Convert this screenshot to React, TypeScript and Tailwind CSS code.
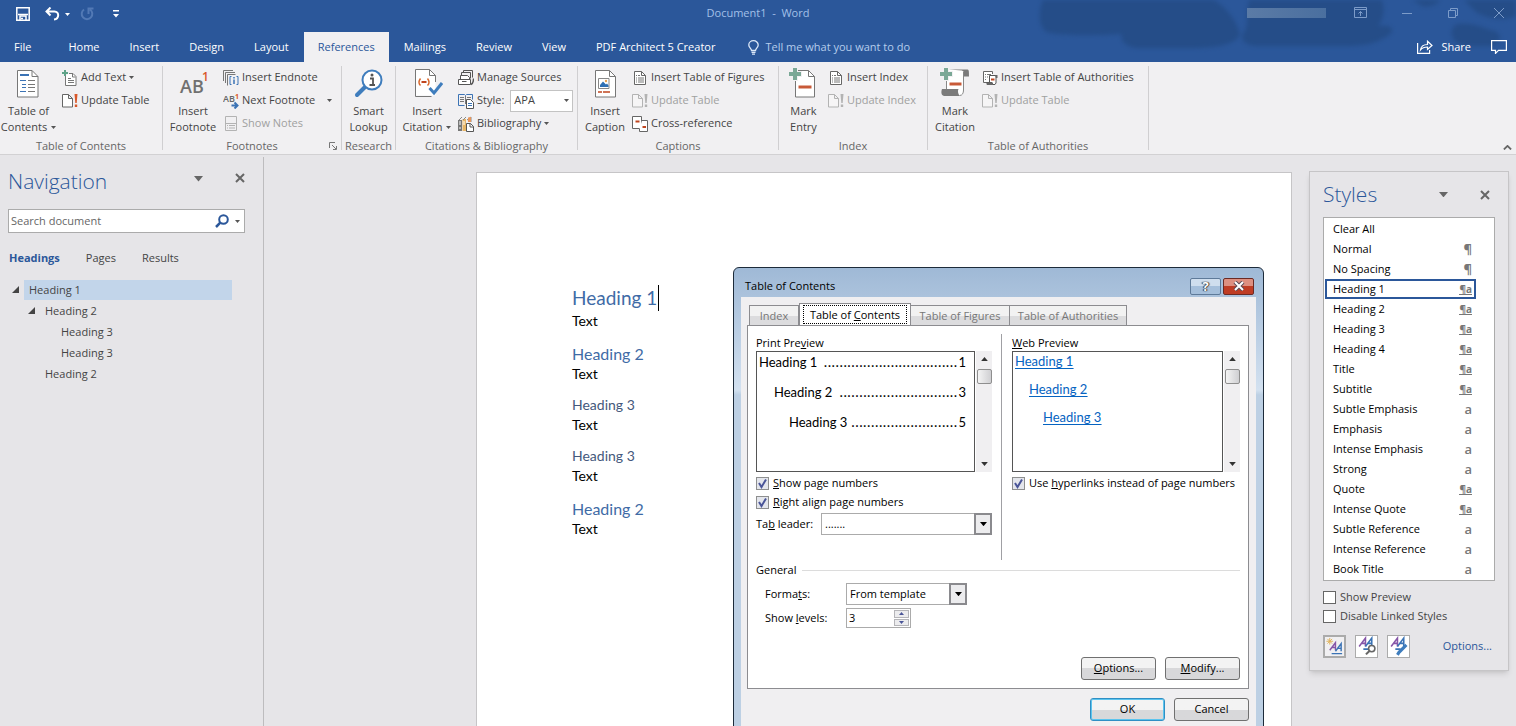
import type { ReactNode } from "react";

const navHeadings = [
  { text: "Heading 1", level: 1, open: true, selected: true },
  { text: "Heading 2", level: 2, open: true },
  { text: "Heading 3", level: 3 },
  { text: "Heading 3", level: 3 },
  { text: "Heading 2", level: 2 },
];

const indents: Record<number, string> = {
  1: "",
  2: "pl-4",
  3: "pl-8",
};

const styleNames: [string, string][] = [
  ["Clear All", ""],
  ["Normal", "p"],
  ["No Spacing", "p"],
  ["Heading 1", "pa"],
  ["Heading 2", "pa"],
  ["Heading 3", "pa"],
  ["Heading 4", "pa"],
  ["Title", "pa"],
  ["Subtitle", "pa"],
  ["Subtle Emphasis", "a"],
  ["Emphasis", "a"],
  ["Intense Emphasis", "a"],
  ["Strong", "a"],
  ["Quote", "pa"],
  ["Intense Quote", "pa"],
  ["Subtle Reference", "a"],
  ["Intense Reference", "a"],
  ["Book Title", "a"],
];

const Caret = ({ className = "w-[5px] text-[#555]" }: { className?: string }) => (
  <svg viewBox="0 0 10 6" fill="currentColor" className={`shrink-0 ${className}`}>
    <path d="M0 0h10L5 6z" />
  </svg>
);

const CloseIcon = () => (
  <svg viewBox="0 0 10 10" className="w-[10px] h-[10px]" stroke="#666" strokeWidth="2">
    <path d="M1 1l8 8M9 1L1 9" />
  </svg>
);

/* ---------- ribbon icons ---------- */

const Small = ({ children }: { children: ReactNode }) => (
  <svg viewBox="0 0 16 16" fill="none" className="w-4 h-4 shrink-0">
    {children}
  </svg>
);

const Big = ({ children }: { children: ReactNode }) => (
  <svg viewBox="0 0 32 32" fill="none" className="w-8 h-8 shrink-0">
    {children}
  </svg>
);

const TocIcon = () => (
  <Big>
    <path d="M4.500 4.500h14.500l6 6v20.500h-20.500z" fill="#fff" stroke="#777" />
    <path d="M19 4.500v6h6" stroke="#777" />
    <path d="M7 9h9" stroke="#3b73b5" strokeWidth="2" />
    <path d="M7 14.500h6M9 18.500h4M9 21.500h4M7 25.500h6" stroke="#3b73b5" />
    <path d="M15 14.500h7M15 18.500h7M15 21.500h7M15 25.500h7" stroke="#777" />
  </Big>
);

const AddTextIcon = () => (
  <Small>
    <path d="M3.500 6v9.500h10.500v-9l-3-3h-4" fill="#fff" stroke="#777" />
    <path d="M10.500 4v3h3M6 8.500h3M6 10.500h6M6 12.500h6" stroke="#777" />
    <path d="M3 0v6M0 3h6" stroke="#5fa389" strokeWidth="2" />
  </Small>
);

const UpdateIcon = ({ off }: { off?: boolean }) => (
  <Small>
    <path
      d="M.5 1.500h6l4 4v8.500H.5zM6.500 1.500v4h4"
      fill={off ? "#f6f5f6" : "#fff"}
      stroke={off ? "#b3b3b3" : "#666"}
    />
    <path d="M12.500 1h3l-.8 9h-1.400zM12.800 11.500h2.400v2.500h-2.400z" fill={off ? "#b3b3b3" : "#d9582b"} />
  </Small>
);

const FootnoteIcon = () => (
  <Big>
    <text x="3" y="27" fontSize="18" fontWeight="600" fill="#707070">
      AB
    </text>
    <text x="25" y="15" fontSize="12" fontWeight="600" fill="#d9582b">
      1
    </text>
  </Big>
);

const EndnoteIcon = () => (
  <Small>
    <path d="M.5 11V.5H10M2.500 13V2.500H12M4.500 15.500V4.500h8" stroke="#777" />
    <path d="M8.500 6.500h-1.500v8h1.500M13.500 6.500H15v8h-1.500" stroke="#3b73b5" />
    <path d="M11 7v1.500M11 9.500V14" stroke="#3b73b5" strokeWidth="1.500" />
  </Small>
);

const NextNoteIcon = () => (
  <Small>
    <text x="0" y="9" fontSize="9" fontWeight="600" fill="#666">
      AB
    </text>
    <text x="12" y="6" fontSize="7" fontWeight="700" fill="#d9582b">
      1
    </text>
    <path d="M8.500 12.500h5M11.500 9.500l3 3-3 3" stroke="#3b73b5" strokeWidth="2" />
  </Small>
);

const ShowNotesIcon = () => (
  <Small>
    <path d="M2.500.5h11v14h-11zM2.500 7.500h11" stroke="#b3b3b3" />
    <path d="M4 9.500h1M6 9.500h6M4 12h1M6 12h6" stroke="#b3b3b3" />
  </Small>
);

const LookupIcon = () => (
  <Big>
    <path d="M12 21l-8 8" stroke="#3f7dbd" strokeWidth="4" strokeLinecap="round" />
    <circle cx="19" cy="14" r="9.500" fill="#fff" stroke="#3f7dbd" strokeWidth="2" />
    <path d="M17 12.500h3v6M16.500 19h5.500" stroke="#555" strokeWidth="1.800" />
    <circle cx="19" cy="9" r="1.500" fill="#555" />
  </Big>
);

const CitationIcon = () => (
  <Big>
    <path d="M4.500 3.500h14l6 6v20h-20z" fill="#fff" />
    <path d="M24.500 16V9.500l-6-6h-14v27h16M18.500 3.500v6h6" stroke="#777" />
    <path d="M9.500 12.500c-2 2.500-2 5 0 7M16.500 12.500c2 2.500 2 5 0 7" stroke="#d9692f" strokeWidth="1.500" />
    <path d="M10.500 16h5" stroke="#c0451f" strokeWidth="2" />
    <path d="M18.500 22l4.500 5 8-10" stroke="#3f7dbd" strokeWidth="3" />
  </Big>
);

const SourcesIcon = () => (
  <Small>
    <path d="M5.500 3V.5h9v7M3.500 5V2.500h9v6" stroke="#555" />
    <path d="M2.500 9V5.500h7l2 2V9" fill="#fff" stroke="#555" />
    <path d="M.5 9.500h12v5H.5zM4 11.500h4.500" fill="#fff" stroke="#555" />
    <path d="M13 14.500c2-1 2.500-2.500 2.500-6" stroke="#555" strokeWidth="1.500" />
  </Small>
);

const StyleIcon = () => (
  <Small>
    <path d="M.5 1.500h6l1 1 1-1h6v5M.5 1.500v11h6" stroke="#3b73b5" />
    <path d="M7.500 3v8M2 4.500h4M2 6.500h4M2 8.500h4M9 4.500h4" stroke="#777" />
    <path d="M8.500 6.500h4l3 3v6h-7z" fill="#fff" stroke="#555" />
    <path d="M10 10.500h4M10 12.500h4" stroke="#3b73b5" />
  </Small>
);

const BiblioIcon = () => (
  <Small>
    <path d="M0 4h4v11H0z" fill="#777" />
    <path d="M4.500 3h3.500v12H4.500z" fill="#e7b566" />
    <path d="M1 4l3-3M5 4l3-3M9 4l4-3v5" stroke="#888" />
    <path d="M1 6h2M1 8h2M5 6h2M5 8h2M1 12h2" stroke="#fff" />
    <path d="M10 1.500L13 1v5h-3z" fill="#e9965b" />
    <path d="M8.500 7.500h4l3 3v5h-7z" fill="#fff" stroke="#555" />
    <path d="M12 7.500v3.500h3.500" stroke="#555" />
  </Small>
);

const CaptionIcon = () => (
  <Big>
    <path d="M6.500 4.500h14l6 6v20.500h-20z" fill="#fff" stroke="#777" />
    <path d="M20.500 4.500v6h6" stroke="#777" />
    <path d="M9.500 12.500h10.500v10H9.500z" stroke="#888" />
    <path d="M11 21v-2l3-3.500 3 3 1-1 1.500 2V21z" fill="#2f6fb3" />
    <circle cx="17" cy="15" r="1.200" fill="#e7a04e" />
    <path d="M9 26h12" stroke="#c0451f" strokeWidth="1.500" strokeDasharray="4 1 7" />
  </Big>
);

const PageIcon = () => (
  <Small>
    <path d="M2.500 1.500h7l4 4v9h-11z" fill="#fff" stroke="#666" />
    <path d="M9.500 1.500v4h4" stroke="#666" />
    <path d="M4 5.500h1M6 5.500h2M4 8h1M6 8h6M4 10h1M6 10h6M4 12h1M6 12h6" stroke="#777" />
  </Small>
);

const CrossRefIcon = () => (
  <Small>
    <path d="M.5.500h9v12H.5z" fill="#fff" stroke="#666" />
    <path d="M3.500 5.500h4" stroke="#c0451f" strokeWidth="2" />
    <path d="M10 4.500h5.500v11h-8V13" fill="#fff" stroke="#666" />
    <path d="M10.500 11h3.500" stroke="#c0451f" strokeWidth="2" />
  </Small>
);

const MarkEntryIcon = () => (
  <Big>
    <path d="M7.500 4.500h13l6 6v20.500h-19z" fill="#fff" stroke="#777" />
    <path d="M20.500 4.500v6h6" stroke="#777" />
    <path d="M10.500 21h13" stroke="#c85a38" strokeWidth="3" />
    <path d="M7 1v14M0 8h14" stroke="#f2f1f3" strokeWidth="6" />
    <path d="M7 2v12M1 8h12" stroke="#7aa896" strokeWidth="4" />
  </Big>
);

const MarkCitationIcon = () => (
  <Big>
    <path d="M7 4h18v20c0 3-1 5-4 5H7z" fill="#fff" />
    <path d="M24.500 6v18c0 3-1 5.500-4 5.500" stroke="#888" />
    <path d="M10 3.500h18c2 0 2 1 2 7h-5c0-4 0-5-2-6z" fill="#7b7b7b" />
    <path d="M3 23h16.500c-1 2-.5 4 1 7H5c-3-1-3-4-2-7z" fill="#7b7b7b" />
    <path d="M7.500 11v12" stroke="#888" />
    <path d="M10.500 18h12" stroke="#c85a38" strokeWidth="3" />
    <path d="M7 1v14M0 8h14" stroke="#f2f1f3" strokeWidth="6" />
    <path d="M7 2v12M1 8h12" stroke="#7aa896" strokeWidth="4" />
  </Big>
);

const AuthoritiesIcon = () => (
  <Small>
    <path d="M6 12.500H1.500v-11h9V4" fill="#fff" stroke="#666" />
    <path d="M3 4.500h1M5 4.500h4M3 7h1M5 7h1M3 9.500h1" stroke="#777" />
    <path d="M7.500 13V5.500h6.500v7.500l-1 1.500H5v-2h5" fill="#fff" stroke="#555" />
    <path d="M13 5h2.500v3H14zM5 12.500h6v2.500H5z" fill="#666" />
    <path d="M9 9.500h3.500" stroke="#c0451f" strokeWidth="2" />
  </Small>
);

/* ---------- ribbon parts ---------- */

const Group = ({ label, className, launcher, children }: {
  label: string;
  className: string;
  launcher?: boolean;
  children: ReactNode;
}) => (
  <section className={`relative flex flex-col shrink-0 my-1 border-r border-[#d0cfd1] ${className}`}>
    <div className="flex flex-1">{children}</div>
    <h2 className="-mb-[2px] text-[11px] leading-3 text-center text-[#666] whitespace-nowrap">{label}</h2>
    {launcher && (
      <button aria-label={`${label} settings`} className="absolute right-1 bottom-0">
        <svg viewBox="0 0 8 8" className="w-2 h-2" fill="none" stroke="#777">
          <path d="M.5 6V.5H6M3 3l4 4M7.500 4v3.500H4" />
        </svg>
      </button>
    )}
  </section>
);

const BigButton = ({ icon, lines, drop, className }: {
  icon: ReactNode;
  lines: [string, string];
  drop?: boolean;
  className: string;
}) => (
  <button className={`flex flex-col items-center shrink-0 h-[70px] text-[11px] leading-4 text-[#444] whitespace-nowrap ${className}`}>
    {icon}
    <span className="mt-[5px]">{lines[0]}</span>
    <span className="flex items-center gap-1">
      {lines[1]}
      {drop && <Caret />}
    </span>
  </button>
);

const SmallButton = ({ icon, text, drop, off, className = "" }: {
  icon: ReactNode;
  text: string;
  drop?: boolean;
  off?: boolean;
  className?: string;
}) => (
  <button
    disabled={off}
    className={`flex items-center gap-[3px] h-[23px] text-[11px] whitespace-nowrap ${off ? "text-[#a0a0a0]" : "text-[#444]"} ${className}`}
  >
    {icon}
    <span className="flex-1 text-left">{text}</span>
    {drop && <Caret />}
  </button>
);

const Ribbon = () => (
  <div className="flex h-[93px] shrink-0 bg-[#f1f0f2] border-b border-[#d2d1d3]">
    <Group label="Table of Contents" className="w-[163px]">
      <BigButton icon={<TocIcon />} lines={["Table of", "Contents"]} drop className="w-[57px]" />
      <div className="pl-[5px]">
        <SmallButton icon={<AddTextIcon />} text="Add Text" drop />
        <SmallButton icon={<UpdateIcon />} text="Update Table" />
      </div>
    </Group>
    <Group label="Footnotes" className="w-[179px]" launcher>
      <BigButton icon={<FootnoteIcon />} lines={["Insert", "Footnote"]} className="w-[60px]" />
      <div>
        <SmallButton icon={<EndnoteIcon />} text="Insert Endnote" />
        <SmallButton icon={<NextNoteIcon />} text="Next Footnote" drop className="w-[109px]" />
        <SmallButton icon={<ShowNotesIcon />} text="Show Notes" off />
      </div>
    </Group>
    <Group label="Research" className="w-[54px]">
      <BigButton icon={<LookupIcon />} lines={["Smart", "Lookup"]} className="w-[53px]" />
    </Group>
    <Group label="Citations & Bibliography" className="w-[182px]">
      <BigButton icon={<CitationIcon />} lines={["Insert", "Citation"]} drop className="w-[62px]" />
      <div>
        <SmallButton icon={<SourcesIcon />} text="Manage Sources" />
        <div className="flex items-center gap-[3px] h-[23px] text-[11px] text-[#444]">
          <StyleIcon />
          <label htmlFor="cite-style">Style:</label>
          <span className="relative flex items-center ml-[3px]">
            <select
              id="cite-style"
              className="appearance-none w-[63px] h-[22px] pl-[3px] bg-white border border-[#c3c3c3]"
            >
              <option>APA</option>
            </select>
            <Caret className="w-[5px] absolute right-1 text-[#555] pointer-events-none" />
          </span>
        </div>
        <SmallButton icon={<BiblioIcon />} text="Bibliography" drop />
      </div>
    </Group>
    <Group label="Captions" className="w-[201px]">
      <BigButton icon={<CaptionIcon />} lines={["Insert", "Caption"]} className="w-[54px]" />
      <div>
        <SmallButton icon={<PageIcon />} text="Insert Table of Figures" />
        <SmallButton icon={<UpdateIcon off />} text="Update Table" off />
        <SmallButton icon={<CrossRefIcon />} text="Cross-reference" />
      </div>
    </Group>
    <Group label="Index" className="w-[149px]">
      <BigButton icon={<MarkEntryIcon />} lines={["Mark", "Entry"]} className="w-[49px]" />
      <div>
        <SmallButton icon={<PageIcon />} text="Insert Index" />
        <SmallButton icon={<UpdateIcon off />} text="Update Index" off />
      </div>
    </Group>
    <Group label="Table of Authorities" className="w-[221px]">
      <BigButton icon={<MarkCitationIcon />} lines={["Mark", "Citation"]} className="w-[54px]" />
      <div>
        <SmallButton icon={<AuthoritiesIcon />} text="Insert Table of Authorities" />
        <SmallButton icon={<UpdateIcon off />} text="Update Table" off />
      </div>
    </Group>
    <button aria-label="Collapse the ribbon" className="ml-auto mr-1 mb-1 self-end">
      <svg viewBox="0 0 10 6" className="w-[9px]" fill="none" stroke="#666" strokeWidth="2">
        <path d="M1 5l4-4 4 4" />
      </svg>
    </button>
  </div>
);

const TitleBar = () => (
  <header className="relative shrink-0 overflow-hidden bg-[#2b579a] text-white">
    <svg
      viewBox="0 0 476 48"
      className="absolute right-0 top-0 w-[476px] h-12 blur-[2px]"
      fill="#234a82"
      opacity=".75"
    >
      <path d="M4-4h170v4c16 10 22 22 26 34-4 10-20 14-50 14H96C84 46 80 40 82 34 50 36 20 36 6 32-4 22 0 8 4-4z" />
      <path d="M210-4h130c6 12 4 22-2 30 20-2 16 8 6 12-10 6-20 8-40 8H214c-12-2-14-8-10-14 6-8 0-14 6-36z" />
      <path d="M366-4h36c-2 8-12 12-20 10zM414 26c8-6 26 0 36 4 12 2 14 10 2 16h-24c-14 0-20-12-14-20zM420-4h56v20c-14 6-30 2-40-4z" />
    </svg>

    <div className="relative flex items-center justify-center h-8">
      <div className="absolute left-4 top-[7px] flex items-center">
        <button aria-label="Save">
          <svg viewBox="0 0 14 14" className="w-[14px] h-[14px]" fill="none" stroke="#fff" strokeWidth="1.500">
            <path d="M.8.8h12.400v12.400H.8zM2 7.500h10" />
            <path d="M4 13v-4h6v4M5 11.500h2" />
          </svg>
        </button>
        <button aria-label="Undo" className="ml-[15px]">
          <svg viewBox="0 0 15 14" className="w-[15px] h-[14px]" fill="none" stroke="#fff" strokeWidth="2">
            <path d="M5.500.5L1.500 4.500l4 4M2 4.500h7.500c5 0 5 7.500-.5 8" />
          </svg>
        </button>
        <Caret className="w-[5px] ml-[5px] text-white" />
        <button aria-label="Redo" className="ml-[10px]">
          <svg viewBox="0 0 14 14" className="w-[14px] h-[14px]" fill="none" stroke="#5279b5" strokeWidth="2">
            <path d="M4 2.500a5.300 5.300 0 1 0 6 0M8.500 7V1.500h5" />
          </svg>
        </button>
        <button aria-label="Customize Quick Access Toolbar" className="ml-[19px]">
          <svg viewBox="0 0 6 8" className="w-[6px] h-2" fill="#fff">
            <path d="M0 0h6v1.400H0zM0 4h6L3 7.500z" />
          </svg>
        </button>
      </div>
      <h1 className="-mt-[6px] text-[11px] text-[#a3c0e8] whitespace-pre">Document1  -  Word</h1>
      <div className="absolute right-3 top-[7px] flex items-center">
        <span className="w-[79px] h-[10px] mr-7 bg-linear-to-r from-[#5b7ba6] to-[#4a6f9f]" />
        <button aria-label="Ribbon display options">
          <svg viewBox="0 0 13 11" className="w-[13px] h-[11px]" fill="none" stroke="#7d9cc9">
            <path d="M.5.5h12v10H.5zM.5 2.500h12M6.500 9V4.500M4.500 6.500l2-2 2 2" />
          </svg>
        </button>
        <button aria-label="Minimize" className="ml-[35px]">
          <svg viewBox="0 0 10 10" className="w-[10px] h-[10px]" stroke="#7d9cc9">
            <path d="M0 5.500h10" />
          </svg>
        </button>
        <button aria-label="Restore" className="ml-9">
          <svg viewBox="0 0 10 10" className="w-[10px] h-[10px]" fill="none" stroke="#7d9cc9">
            <path d="M.5 2.500h7v7h-7zM2.500 2.500v-2h7v7h-2" />
          </svg>
        </button>
        <button aria-label="Close" className="ml-9">
          <svg viewBox="0 0 10 10" className="w-[10px] h-[10px]" stroke="#7d9cc9">
            <path d="M0 0l10 10M10 0L0 10" />
          </svg>
        </button>
      </div>
    </div>

    <nav className="relative flex items-center h-[30px] text-[11px] whitespace-nowrap">
      <button className="pl-[14px] pr-[22px]">File</button>
      {["Home", "Insert", "Design", "Layout"].map((tab) => (
        <button key={tab} className="px-[15px]">{tab}</button>
      ))}
      <button className="h-full px-[14px] bg-[#f1f0f2] text-[#2b579a]">References</button>
      {["Mailings", "Review", "View", "PDF Architect 5 Creator"].map((tab) => (
        <button key={tab} className="px-[15px]">{tab}</button>
      ))}
      <button className="flex items-center gap-[6px] px-[18px] text-[#b5cdec]">
        <svg viewBox="0 0 11 15" className="w-[11px] h-[15px]" fill="none" stroke="#dce8f8" strokeWidth="1.300">
          <path d="M3.500 10.500c0-2-2.700-3-2.700-5.500a4.700 4.300 0 0 1 9.400 0c0 2.500-2.700 3.500-2.700 5.500zM3.500 12.300h4M4 14.200h3" />
        </svg>
        Tell me what you want to do
      </button>
      <button className="flex items-center gap-2 ml-auto mr-5">
        <svg viewBox="0 0 16 14" className="w-4 h-[14px]" fill="none" stroke="#fff" strokeWidth="1.200">
          <path d="M.6 3v10.400h12V10" />
          <path d="M3.500 10c.5-4 3-5.500 7-5.500V1.200L15 5.500l-4.500 4V7c-3 0-5 .5-7 3z" />
        </svg>
        Share
      </button>
      <button aria-label="Comments" className="mr-[9px]">
        <svg viewBox="0 0 16 14" className="w-4 h-[14px]" fill="none" stroke="#fff" strokeWidth="1.200">
          <path d="M.6.6h14.800v9.800H7.500L4.500 13.400v-3H.6z" />
        </svg>
      </button>
    </nav>
  </header>
);

const Navigation = () => (
  <aside className="w-[264px] shrink-0 mt-[2px] pl-2 pr-[18px] border-r border-[#bdbcbe] text-[11px] text-[#444]">
    <div className="flex items-center h-[50px]">
      <h2 className="font-light text-[21px] text-[#2b579a]">Navigation</h2>
      <button aria-label="Pane options" className="ml-auto mb-[6px]">
        <Caret className="w-[9px] text-[#666]" />
      </button>
      <button aria-label="Close navigation" className="ml-8 mb-2">
        <CloseIcon />
      </button>
    </div>
    <div className="flex items-center gap-[6px] h-6 mt-[2px] px-[2px] bg-white border border-[#ababab]">
      <input
        aria-label="Search document"
        placeholder="Search document"
        className="flex-1 min-w-0 outline-none placeholder:text-[#666]"
      />
      <svg viewBox="0 0 14 14" className="w-[14px] h-[14px]" fill="none" stroke="#2b579a" strokeWidth="2">
        <circle cx="8.500" cy="5.500" r="4.300" />
        <path d="M5.300 8.700L1 13" strokeWidth="2.500" />
      </svg>
      <Caret className="w-[5px] text-[#555] mr-[2px]" />
    </div>
    <div className="flex gap-[26px] mt-4 pl-px leading-[18px]">
      <button className="font-bold text-[#2b579a]">Headings</button>
      <button>Pages</button>
      <button>Results</button>
    </div>
    <ul className="mt-3 mr-[13px]">
      {navHeadings.map((h, i) => (
        <li key={i} className={`flex items-center h-[21px] ${indents[h.level]}`}>
          <svg viewBox="0 0 7 7" className="w-[7px] h-[7px] mx-1" fill="#444">
            {h.open && <path d="M7 0v7H0z" />}
          </svg>
          <span className={`flex-1 ml-px pl-[5px] leading-5 ${h.selected ? "bg-[#c2d5ea]" : ""}`}>{h.text}</span>
        </li>
      ))}
    </ul>
  </aside>
);

const StylesPane = () => (
  <aside className="w-[200px] shrink-0 self-start mt-4 mr-[7px] px-[13px] bg-[#e6e5e8] border border-[#c6c5c7] shadow-md text-[11px] text-[#444]">
    <div className="flex items-center h-[45px]">
      <h2 className="font-light text-[21px] text-[#2b579a]">Styles</h2>
      <button aria-label="Pane options" className="ml-auto">
        <Caret className="w-[9px] text-[#666]" />
      </button>
      <button aria-label="Close styles" className="ml-8 mr-[5px]">
        <CloseIcon />
      </button>
    </div>
    <ul className="pt-px pb-px pl-px pr-[18px] bg-white border border-[#ababab] text-black">
      {styleNames.map(([name, kind]) => (
        <li
          key={name}
          className={`flex items-center justify-between h-5 pl-[6px] pr-[2px] border-2 ${name === "Heading 1" ? "border-[#2b579a]" : "border-transparent"}`}
        >
          {name}
          {kind === "p" && <span className="text-[13px] leading-4 text-[#777] font-bold">¶</span>}
          {kind === "a" && <span className="text-[13px] leading-4 text-[#777] font-semibold">a</span>}
          {kind === "pa" && (
            <span className="text-[10px] leading-[10px] text-[#777] font-bold border-b border-[#777]">¶a</span>
          )}
        </li>
      ))}
    </ul>
    <div className="mt-[7px]">
      {["Show Preview", "Disable Linked Styles"].map((label) => (
        <label key={label} className="flex items-center gap-1 h-[19px]">
          <input type="checkbox" className="appearance-none w-[13px] h-[13px] bg-white border border-[#666]" />
          {label}
        </label>
      ))}
    </div>
    <div className="flex items-center gap-[9px] mt-[9px] mb-3">
      {["New Style", "Style Inspector", "Manage Styles"].map((label, i) => (
        <button
          key={label}
          aria-label={label}
          className={`w-[23px] h-[23px] border-[#ababab] ${i === 0 ? "border-2 bg-[#f1f0f2]" : "border bg-white"}`}
        >
          <svg viewBox="0 0 20 20" className="w-full h-full" fill="none" strokeWidth="1.500">
            <path d={i === 0 ? "M5 14l6-8v8M7 11h4" : "M3 10l6-8v8M5 7h4"} stroke="#8656a8" />
            <path d={i === 0 ? "M11 15l6-8v8M13 12h4M7 17.500h11" : "M9 10l6-8v8M11 7h4M7 12.500h5"} stroke="#3b73b5" />
            {i === 0 && <path d="M5 1v7M1.500 4.500h7M2.500 2l5 5M7.500 2l-5 5" stroke="#e0b25a" strokeWidth="1" />}
            {i === 1 && (
              <>
                <circle cx="15" cy="12" r="3" fill="#fff" stroke="#666" />
                <path d="M13 14l-3.500 3.500" stroke="#666" strokeWidth="2" />
              </>
            )}
            {i === 2 && <path d="M17.500 8.500l-7 7-1.500 2.500" stroke="#3f7dbd" strokeWidth="3" />}
          </svg>
        </button>
      ))}
      <a href="#options" className="ml-auto mr-[3px] text-[#2b579a]">Options...</a>
    </div>
  </aside>
);

const Document = () => (
  <main className="flex flex-1 justify-end min-w-0 pt-[17px] pr-[17px]">
    <article className="w-[816px] shrink-0 pl-[95px] pt-[111px] bg-white border border-b-0 border-[#c6c5c7] font-['Lato',sans-serif] text-sm leading-5 text-black">
      <h1 className="flex items-center text-[19px] leading-[27px] text-[#3f6ba6]">
        Heading 1<span className="w-px h-[26px] ml-px bg-black" />
      </h1>
      <p>Text</p>
      <h2 className="mt-3 text-base leading-[21px] text-[#3f6ba6]">Heading 2</h2>
      <p>Text</p>
      <h3 className="mt-[11px] text-sm leading-5 text-[#44587c]">Heading 3</h3>
      <p>Text</p>
      <h3 className="mt-[11px] text-sm leading-5 text-[#44587c]">Heading 3</h3>
      <p>Text</p>
      <h2 className="mt-3 text-base leading-[21px] text-[#3f6ba6]">Heading 2</h2>
      <p>Text</p>
    </article>
  </main>
);

/* ---------- dialog ---------- */

const Scrollbar = () => (
  <div className="flex flex-col items-center w-4 ml-px py-[6px] bg-[#f0eff1]">
    <Caret className="w-[7px] h-1 rotate-180 text-[#333]" />
    <span className="w-[15px] h-[15px] mt-2 border border-[#8e8e8e] rounded-xs bg-linear-to-r from-[#f4f4f4] to-[#cfcfd2]" />
    <Caret className="w-[7px] h-1 mt-auto text-[#333]" />
  </div>
);

const Check = ({ children }: { children: ReactNode }) => (
  <label className="flex items-center gap-1 h-[19px] whitespace-nowrap">
    <span className="relative flex">
      <input
        type="checkbox"
        defaultChecked
        className="appearance-none w-[13px] h-[13px] border border-[#8e8f8f] bg-[#e4e6ec]"
      />
      <svg viewBox="0 0 13 13" className="absolute w-[13px] h-[13px] pointer-events-none" fill="none" stroke="#4a5598" strokeWidth="2">
        <path d="M3 6l2.500 4L10 2.500" />
      </svg>
    </span>
    <span>{children}</span>
  </label>
);

const TocLine = ({ text, dots, page, className = "" }: {
  text: string;
  dots: string;
  page: number;
  className?: string;
}) => (
  <p className={`flex items-baseline h-[30px] leading-[18px] ${className}`}>
    {text}
    <span className="ml-auto mr-px font-['Open_Sans',sans-serif] text-[15px]">{dots}</span>
    {page}
  </p>
);

const DropDown = ({ id, value, className }: { id: string; value: string; className: string }) => (
  <span className={`relative flex ${className}`}>
    <select id={id} className="appearance-none w-full h-[22px] pl-[3px] bg-white border border-[#ababab]">
      <option>{value}</option>
    </select>
    <span className="absolute right-0 top-0 flex items-center justify-center w-[18px] h-[22px] border-2 border-[#8a8a8e] bg-[#ececee] pointer-events-none">
      <Caret className="w-[7px] text-black" />
    </span>
  </span>
);

const DialogButton = ({ primary, children }: { primary?: boolean; children: ReactNode }) => (
  <button
    className={`w-[75px] h-[23px] rounded-[3px] border bg-linear-to-b from-[#f3f3f3] from-50% to-[#d8d8da] to-50% ${
      primary ? "border-[#2f8fc4] ring-1 ring-inset ring-[#5cc4ee]" : "border-[#707070]"
    }`}
  >
    {children}
  </button>
);

const dialogTab =
  "h-5 border border-b-0 border-[#8c8c90] bg-linear-to-b from-[#f2f2f2] from-50% to-[#dcdcde] to-50%";

const TocDialog = () => (
  <div
    role="dialog"
    aria-label="Table of Contents"
    className="absolute left-[733px] top-[267px] w-[531px] h-[490px] px-[7px] rounded-t-md border border-[#1d2b3a] bg-linear-to-b from-[#9fb9d6] via-[#d3e1f0] via-25% to-[#bdd0e4] to-26% text-[11px] text-black"
  >
    <div className="flex items-center h-[29px] pl-1">
      <h2 className="mt-[7px]">Table of Contents</h2>
      <button
        aria-label="Help"
        className="ml-auto w-[31px] h-[17px] mt-[7px] rounded-xs border border-[#5e7a99] bg-linear-to-b from-[#cfdeee] from-50% to-[#a5bfdb] to-50% text-[13px] leading-[15px] font-bold text-white [text-shadow:0_0_1px_#333,1px_0_1px_#333,-1px_0_1px_#333]"
      >
        ?
      </button>
      <button
        aria-label="Close"
        className="flex items-center justify-center ml-[2px] mr-[2px] w-[31px] h-[17px] mt-[7px] rounded-xs border border-[#6b2a24] bg-linear-to-b from-[#dd8f80] from-50% to-[#bf3c24] to-50%"
      >
        <svg viewBox="0 0 12 10" className="w-3 h-[10px]">
          <path d="M2 1l8 8M10 1L2 9" stroke="#5b4b55" strokeWidth="4" />
          <path d="M2 1l8 8M10 1L2 9" stroke="#fff" strokeWidth="2" />
        </svg>
      </button>
    </div>

    <div className="h-full pl-[6px] pr-[7px] pt-[6px] bg-[#f0eff1]">
      <div className="flex items-end pl-[2px] leading-[18px] text-[#777] whitespace-nowrap">
        <button className={`w-[50px] ${dialogTab}`}>Index</button>
        <button className="w-28 h-[22px] px-1 pb-px border border-b-0 border-[#8c8c90] bg-white text-black">
          <span className="block leading-[17px] outline-1 outline-dotted outline-black">
            Table of <u>C</u>ontents
          </span>
        </button>
        <button className={`w-[99px] border-l-0 ${dialogTab}`}>Table of Figures</button>
        <button className={`w-[117px] border-l-0 ${dialogTab}`}>Table of Authorities</button>
      </div>

      <div className="h-[364px] px-2 pt-2 bg-white border border-[#8c8c90]">
        <div className="flex">
          <div className="w-[246px] h-[226px] pr-[9px] border-r border-[#a0a0a4]">
            <div className="leading-[17px]">Print Pre<u>v</u>iew</div>
            <div className="flex h-[121px]">
              <div className="flex-1 px-[2px] pr-2 border border-[#555] font-['Lato',sans-serif] text-[13px]">
                <TocLine text="Heading 1" dots=".................................." page={1} />
                <TocLine text="Heading 2" dots=".............................." page={3} className="pl-[15px]" />
                <TocLine text="Heading 3" dots="..........................." page={5} className="pl-[30px]" />
              </div>
              <Scrollbar />
            </div>
            <div className="mt-[2px]">
              <Check><u>S</u>how page numbers</Check>
              <Check><u>R</u>ight align page numbers</Check>
            </div>
            <div className="flex items-center justify-between mt-px">
              <label htmlFor="leader">Ta<u>b</u> leader:</label>
              <DropDown id="leader" value="......." className="w-[171px]" />
            </div>
          </div>
          <div className="flex-1 pl-[10px]">
            <div className="leading-[17px]"><u>W</u>eb Preview</div>
            <div className="flex h-[121px]">
              <div className="flex flex-col items-start flex-1 pl-[2px] border border-[#555] font-['Lato',sans-serif] text-[13px] leading-[18px] text-[#0563c1] underline underline-offset-2">
                <a href="#h1" className="mb-[10px]">Heading 1</a>
                <a href="#h2" className="mb-[10px] ml-[14px]">Heading 2</a>
                <a href="#h3" className="ml-7">Heading 3</a>
              </div>
              <Scrollbar />
            </div>
            <div className="mt-[2px]">
              <Check>Use <u>h</u>yperlinks instead of page numbers</Check>
            </div>
          </div>
        </div>

        <div className="flex items-center gap-[6px] mt-[2px] leading-4">
          General
          <span className="flex-1 h-px bg-[#dcdcdc]" />
        </div>
        <div className="flex items-center h-[22px] mt-[5px] pl-[9px]">
          <label htmlFor="formats" className="w-[81px]">Forma<u>t</u>s:</label>
          <DropDown id="formats" value="From template" className="w-[121px]" />
        </div>
        <div className="flex items-center h-5 mt-[3px] pl-[9px]">
          <label htmlFor="levels" className="w-[81px]">Show <u>l</u>evels:</label>
          <span className="flex w-[65px] h-5 p-px bg-white border border-[#ababab]">
            <input id="levels" defaultValue="3" className="flex-1 min-w-0 pl-px outline-none" />
            <span className="flex flex-col gap-px w-[15px]">
              <button aria-label="More levels" className="flex items-center justify-center flex-1 bg-[#ececee] border border-[#b5b5b9]">
                <Caret className="w-[5px] rotate-180 text-[#4a5598]" />
              </button>
              <button aria-label="Fewer levels" className="flex items-center justify-center flex-1 bg-[#ececee] border border-[#b5b5b9]">
                <Caret className="w-[5px] text-[#4a5598]" />
              </button>
            </span>
          </span>
        </div>
        <div className="flex justify-end gap-[9px] mt-[29px]">
          <DialogButton><u>O</u>ptions...</DialogButton>
          <DialogButton><u>M</u>odify...</DialogButton>
        </div>
      </div>

      <div className="flex justify-end gap-[9px] mt-[9px]">
        <DialogButton primary>OK</DialogButton>
        <DialogButton>Cancel</DialogButton>
      </div>
    </div>
  </div>
);

const App = () => {
  return (
    <div className="relative flex flex-col h-screen overflow-hidden bg-[#e6e5e8] font-['Open_Sans','Noto_Sans',sans-serif]">
      <TitleBar />
      <Ribbon />
      <div className="flex flex-1 min-h-0">
        <Navigation />
        <Document />
        <StylesPane />
      </div>
      <TocDialog />
    </div>
  );
};

export default App;
